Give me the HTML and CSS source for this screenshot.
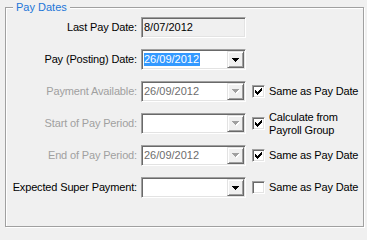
FILE: index.html
```html
<!DOCTYPE html>
<html>
<head>
<meta charset="utf-8">
<link rel="stylesheet" href="styles.css">
</head>
<body>
<fieldset class="group">
  <legend class="group-title">Pay Dates</legend>
  <div class="form">
    <span class="lbl">Last Pay Date:</span>
    <div class="field readonly"><span class="val">8/07/2012</span></div>
    <span></span>

    <span class="lbl">Pay (Posting) Date:</span>
    <div class="field"><span class="val"><span class="sel">26/09/2012</span></span><span class="btn"><svg width="7" height="4" viewBox="0 0 7 4" shape-rendering="crispEdges"><path d="M0 0h7v1H0zM1 1h5v1H1zM2 2h3v1H2zM3 3h1v1H3z" fill="#000"/></svg></span></div>
    <span></span>

    <span class="lbl dis">Payment Available:</span>
    <div class="field disabled"><span class="val">26/09/2012</span><span class="btn"><svg width="8" height="5" viewBox="0 0 8 5" shape-rendering="crispEdges"><path d="M1 1h7v1H1zM2 2h5v1H2zM3 3h3v1H3zM4 4h1v1H4z" fill="#fff"/><path d="M0 0h7v1H0zM1 1h5v1H1zM2 2h3v1H2zM3 3h1v1H3z" fill="#a0a0a0"/></svg></span></div>
    <div class="opt"><span class="box"><svg width="7" height="7" viewBox="0 0 7 7" shape-rendering="crispEdges"><path d="M0 2h1v3H0zM1 3h1v3H1zM2 4h1v3H2zM3 3h1v3H3zM4 2h1v3H4zM5 1h1v3H5zM6 0h1v3H6z" fill="#000"/></svg></span><span class="opt-text">Same as Pay Date</span></div>

    <span class="lbl dis">Start of Pay Period:</span>
    <div class="field disabled"><span class="val"></span><span class="btn"><svg width="8" height="5" viewBox="0 0 8 5" shape-rendering="crispEdges"><path d="M1 1h7v1H1zM2 2h5v1H2zM3 3h3v1H3zM4 4h1v1H4z" fill="#fff"/><path d="M0 0h7v1H0zM1 1h5v1H1zM2 2h3v1H2zM3 3h1v1H3z" fill="#a0a0a0"/></svg></span></div>
    <div class="opt"><span class="box"><svg width="7" height="7" viewBox="0 0 7 7" shape-rendering="crispEdges"><path d="M0 2h1v3H0zM1 3h1v3H1zM2 4h1v3H2zM3 3h1v3H3zM4 2h1v3H4zM5 1h1v3H5zM6 0h1v3H6z" fill="#000"/></svg></span><span class="opt-text">Calculate from<br>Payroll Group</span></div>

    <span class="lbl dis">End of Pay Period:</span>
    <div class="field disabled"><span class="val">26/09/2012</span><span class="btn"><svg width="8" height="5" viewBox="0 0 8 5" shape-rendering="crispEdges"><path d="M1 1h7v1H1zM2 2h5v1H2zM3 3h3v1H3zM4 4h1v1H4z" fill="#fff"/><path d="M0 0h7v1H0zM1 1h5v1H1zM2 2h3v1H2zM3 3h1v1H3z" fill="#a0a0a0"/></svg></span></div>
    <div class="opt"><span class="box"><svg width="7" height="7" viewBox="0 0 7 7" shape-rendering="crispEdges"><path d="M0 2h1v3H0zM1 3h1v3H1zM2 4h1v3H2zM3 3h1v3H3zM4 2h1v3H4zM5 1h1v3H5zM6 0h1v3H6z" fill="#000"/></svg></span><span class="opt-text">Same as Pay Date</span></div>

    <span class="lbl">Expected Super Payment:</span>
    <div class="field"><span class="val"></span><span class="btn"><svg width="7" height="4" viewBox="0 0 7 4" shape-rendering="crispEdges"><path d="M0 0h7v1H0zM1 1h5v1H1zM2 2h3v1H2zM3 3h1v1H3z" fill="#000"/></svg></span></div>
    <div class="opt"><span class="box"></span><span class="opt-text">Same as Pay Date</span></div>
  </div>
</fieldset>
</body>
</html>
```

FILE: styles.css
```css
html, body {
  margin: 0;
  padding: 0;
}
body {
  background: #f0f0f0;
  width: 367px;
  height: 229px;
  overflow: hidden;
  font-family: "Liberation Sans", Arial, sans-serif;
  font-size: 11px;
  letter-spacing: -0.15px;
  color: #000;
}
.group {
  box-sizing: border-box;
  width: 359px;
  margin: 0 0 0 5px;
  padding: 2px 0 28px 0;
  border: 1px solid #a0a0a0;
  box-shadow: inset 1px 1px 0 #fff, 1px 1px 0 #fff;
  min-inline-size: 0;
}
.group-title {
  margin-left: 7px;
  padding: 0 3px;
  height: 15px;
  line-height: 15px;
  font-size: 11px;
  letter-spacing: 0;
  color: #1c76d8;
  background: #f0f0f0;
}
.form {
  display: grid;
  grid-template-columns: 131px 105px auto;
  grid-auto-rows: 21px;
  row-gap: 11px;
  column-gap: 4px;
  align-items: center;
}
.lbl {
  text-align: right;
  white-space: nowrap;
  line-height: 13px;
}
.lbl.dis {
  color: #a0a0a0;
}
.field {
  box-sizing: border-box;
  height: 21px;
  padding: 1px;
  border: 1px solid;
  border-color: #a0a0a0 #fff #fff #a0a0a0;
  box-shadow: inset 1px 1px 0 #696969, inset -1px -1px 0 #e3e3e3;
  background: #fff;
  display: flex;
  align-items: center;
}
.field.readonly {
  background: #f0f0f0;
}
.val {
  flex: 1;
  line-height: 13px;
  white-space: nowrap;
  padding-left: 1px;
  letter-spacing: 0;
}
.field.disabled .val {
  color: #6d6d6d;
}
.sel {
  display: inline-block;
  background: #3399ff;
  color: #fff;
  padding-right: 1px;
}
.btn {
  box-sizing: border-box;
  width: 17px;
  height: 17px;
  background: #f0f0f0;
  border: 1px solid;
  border-color: #e3e3e3 #696969 #696969 #e3e3e3;
  box-shadow: inset 1px 1px 0 #fff, inset -1px -1px 0 #a0a0a0;
  display: flex;
  align-items: center;
  justify-content: center;
}
.btn svg {
  display: block;
}
.opt {
  display: flex;
  align-items: center;
  gap: 4px;
  margin-left: 2px;
}
.box {
  box-sizing: border-box;
  width: 13px;
  height: 13px;
  flex: none;
  border: 1px solid;
  border-color: #a0a0a0 #fff #fff #a0a0a0;
  box-shadow: inset 1px 1px 0 #696969, inset -1px -1px 0 #e3e3e3;
  background: #fff;
  display: flex;
  align-items: center;
  justify-content: center;
}
.box svg {
  display: block;
}
.opt-text {
  line-height: 13px;
  white-space: nowrap;
}
```
